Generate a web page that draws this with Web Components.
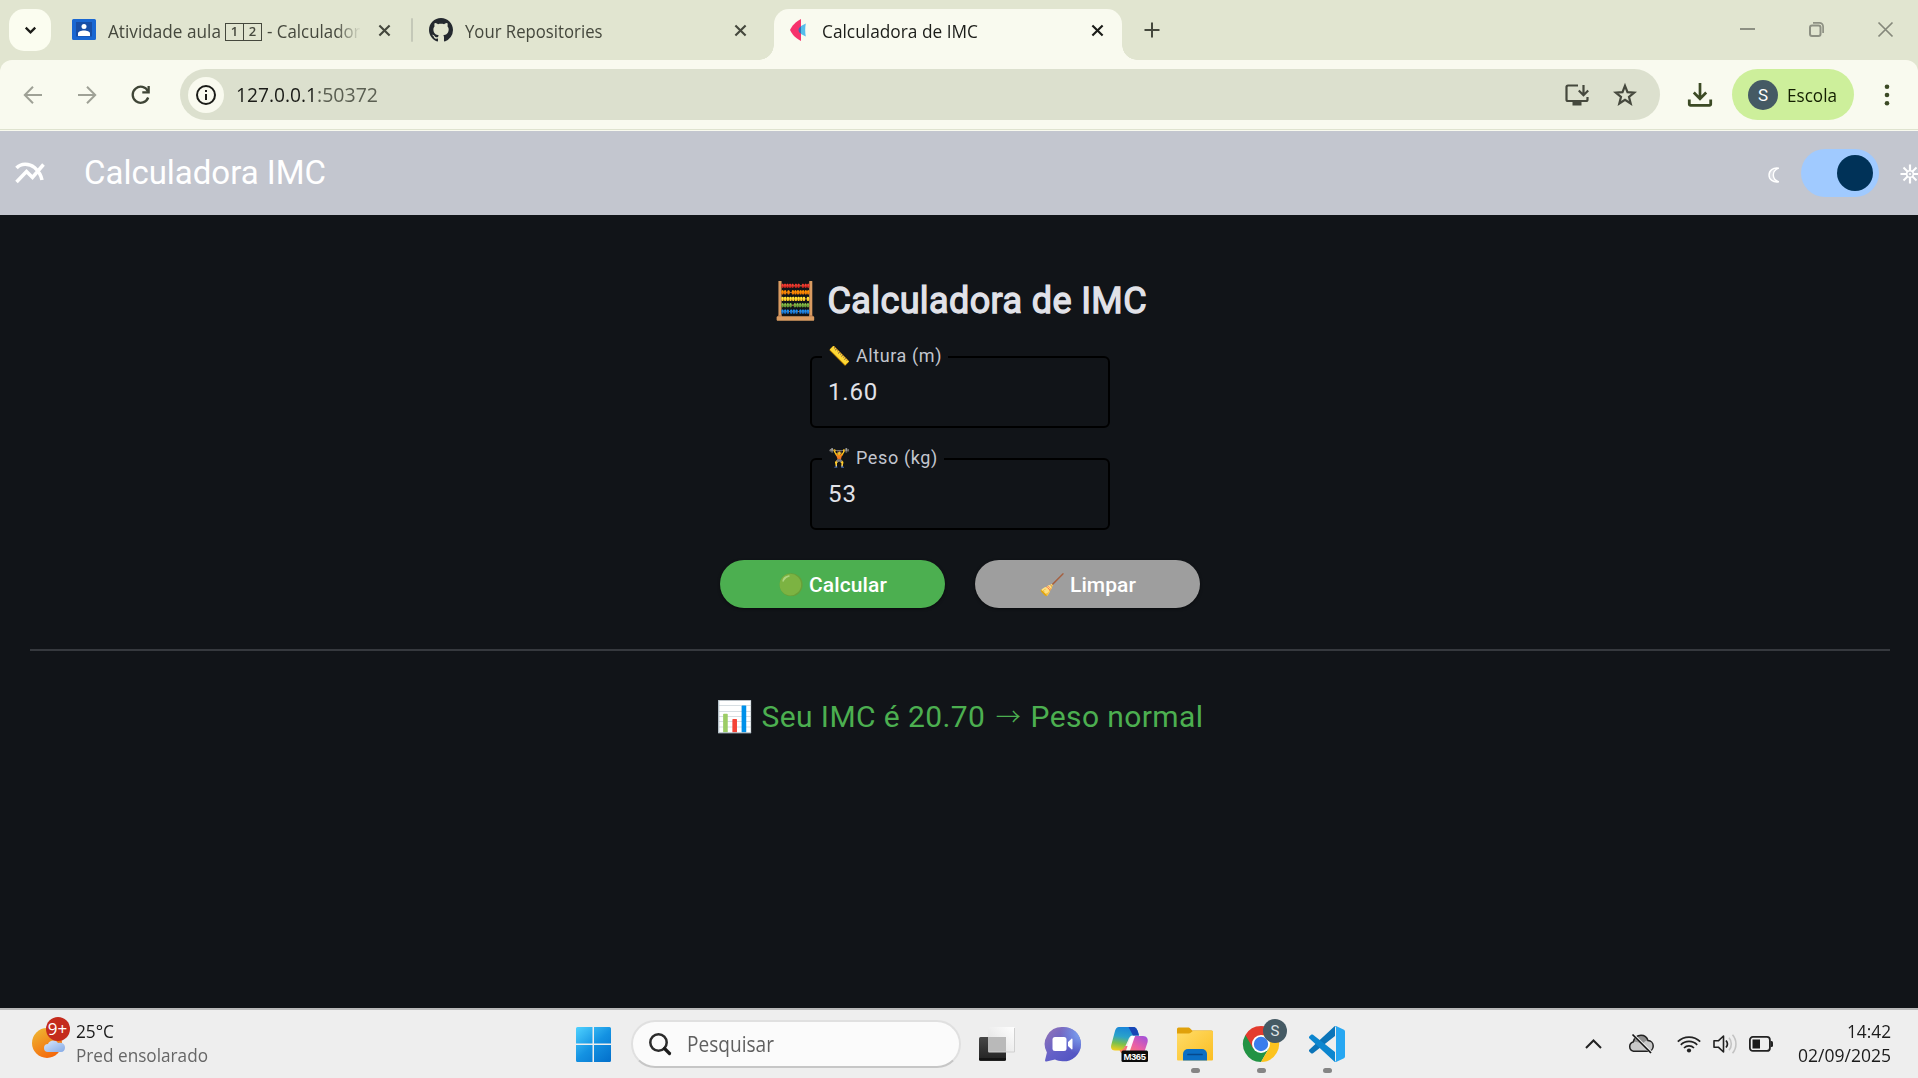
<!DOCTYPE html>
<html lang="pt-BR">
<head>
<meta charset="utf-8">
<title>Calculadora de IMC</title>
<style>
html,body{margin:0;height:100%}
body{display:flex;flex-direction:column;width:1918px;height:1078px;overflow:hidden;font-family:"Open Sans","Noto Sans",sans-serif;background:#111418}
</style>
</head>
<body>
<browser-tabs></browser-tabs>
<browser-toolbar></browser-toolbar>
<app-header heading="Calculadora IMC"></app-header>
<imc-page></imc-page>
<task-bar></task-bar>
<script>
const define = (name, html, setup) => {
  const tpl = document.createElement('template');
  tpl.innerHTML = html;
  customElements.define(name, class extends HTMLElement {
    connectedCallback() {
      if (this.shadowRoot) return;
      this.attachShadow({mode: 'open'}).appendChild(tpl.content.cloneNode(true));
      customElements.upgrade(this.shadowRoot);
      if (setup) setup(this, this.shadowRoot);
    }
  });
};

const ICONS = {
  chevdown: [20,20,'<path d="M5 7l5 5 5-5" fill="none" stroke="#1b1c18" stroke-width="2.4"/>'],
  close: [14,14,'<path d="M1.5 1.5l11 11M12.500 1.500l-11 11" stroke="currentColor" stroke-width="2.3"/>'],
  plus: [16,16,'<path d="M8 .5v15M.5 8h15" stroke="#45483d" stroke-width="2"/>'],
  classroom: [24,24,'<path d="M0 2.500a1.500 1.500 0 011.500-1.500h21a1.500 1.500 0 011.500 1.500v18a1.500 1.500 0 01-1.500 1.500h-21a1.500 1.500 0 01-1.500-1.500z" fill="#1967d2"/><path d="M4 4h16v14.500H4z" fill="#174ea6"/><circle cx="12" cy="8.500" r="2.500" fill="#fff"/><path d="M6 18v-2.500c0-1.800 3-3 6-3s6 1.200 6 3V18z" fill="#fff"/>'],
  github: [16,16,'<path fill="#24292f" d="M8 0C3.580 0 0 3.580 0 8c0 3.540 2.290 6.530 5.470 7.590.4.070.55-.17.55-.38 0-.19-.01-.82-.01-1.490-2.010.37-2.530-.49-2.690-.94-.09-.23-.48-.94-.82-1.130-.28-.15-.68-.52-.01-.53.63-.01 1.080.58 1.230.82.72 1.210 1.870.87 2.330.66.07-.52.28-.87.51-1.070-1.780-.2-3.640-.89-3.640-3.950 0-.87.31-1.590.82-2.150-.08-.2-.36-1.020.08-2.120 0 0 .67-.21 2.200.82.64-.18 1.320-.27 2-.27.68 0 1.360.09 2 .27 1.530-1.040 2.200-.82 2.200-.82.44 1.100.16 1.920.08 2.120.51.56.82 1.270.82 2.150 0 3.070-1.870 3.750-3.650 3.950.29.25.54.73.54 1.480 0 1.070-.01 1.930-.01 2.200 0 .21.15.46.55.38A8.013 8.013 0 0016 8c0-4.420-3.580-8-8-8z"/>'],
  flet: [24,24,'<path d="M14 1v22c-6-3-9-7-11-11C5 8 8 4 14 1z" fill="#f6326c"/><path d="M14 8.500c-1.500.5-2.500 2-2.500 3.500s1 3 2.500 3.500z" fill="#3670b8"/><path d="M14 8l4.800-2.500c-.8 4.500-.8 8.500 0 13L14 16z" fill="#55bdeb"/>'],
  min: [15,15,'<path d="M0 7h15" stroke="#8d9083" stroke-width="2"/>'],
  max: [15,15,'<rect x="1" y="3.500" width="10.500" height="10.500" rx="2" fill="none" stroke="#8d9083" stroke-width="2"/><path d="M4 .9h6.500a3.600 3.600 0 013.600 3.600V11" fill="none" stroke="#8d9083" stroke-width="1.700"/>'],
  exit: [15,15,'<path d="M.5 .5l14 14M14.500 .5l-14 14" stroke="#85887b" stroke-width="1.700"/>'],
  back: [20,20,'<path d="M19 10H2M10 1.800L1.800 10l8.200 8.200" fill="none" stroke="#9fa196" stroke-width="2"/>'],
  fwd: [20,20,'<path d="M1 10h17M10 1.800l8.200 8.200-8.200 8.200" fill="none" stroke="#9fa196" stroke-width="2"/>'],
  reload: [20,20,'<path d="M17.200 12.500A8 8 0 1117 6.500" fill="none" stroke="#3f4536" stroke-width="2.300"/><path d="M18.800 1v7.500h-7.500V6.300h5.200V1z" fill="#3f4536"/>'],
  info: [22,22,'<circle cx="11" cy="11" r="9" fill="none" stroke="#1b1c18" stroke-width="2"/><path d="M11 10v6M11 6v2" stroke="#1b1c18" stroke-width="2"/>'],
  install: [24,24,'<path d="M13 2.500H3A1.500 1.500 0 001.500 4v12.500A1.500 1.500 0 003 18h18a1.500 1.500 0 001.500-1.500V14" fill="none" stroke="#45483d" stroke-width="2.200"/><path d="M7.500 18h9v4.500h-9z" fill="#45483d"/><path d="M18.500 2v10M13.800 7.500l4.700 4.700 4.700-4.700" fill="none" stroke="#45483d" stroke-width="2.200"/>'],
  star: [24,24,'<path d="M12 2.800l2.500 6.300 6.700.5-5.200 4.300 1.700 6.600L12 16.900l-5.700 3.600L8 13.900 2.800 9.600l6.700-.5z" fill="none" stroke="#45483d" stroke-width="2.200"/>'],
  download: [24,24,'<path d="M12 0v16M5.800 9.500L12 15.800l6.200-6.300" fill="none" stroke="#3c4a25" stroke-width="2.700"/><path d="M1.300 16.500v4.700a1.200 1.200 0 001.200 1.200h19a1.200 1.200 0 001.200-1.200v-4.700" fill="none" stroke="#3c4a25" stroke-width="2.800"/>'],
  dots: [6,24,'<g fill="#3c4a25"><circle cx="3" cy="3.700" r="2.300"/><circle cx="3" cy="12" r="2.300"/><circle cx="3" cy="20.300" r="2.300"/></g>'],
  lines: [30,22,'<path d="M1.500 20L11.500 9.500l6 6L28.500 2.500M1.500 6C6 1 14 1 19.500 5.500c4.500 4 6.500 7.500 7.500 12.500" fill="none" stroke="#fff" stroke-width="3.500"/>'],
  moon: [12,16,'<path d="M10.800 1.200C5 .3 1 3.500 1 8s4 7.700 9.800 6.800C7 13.500 5.300 11 5.300 8s1.700-5.500 5.500-6.800z" fill="#fff" fill-opacity=".35" stroke="#fff" stroke-width="1.400"/>'],
  sun: [20,20,'<g stroke="#fff" fill="none" stroke-width="2.200"><circle cx="10" cy="10" r="3.300" stroke-width="1.500"/><path d="M10 .5v6M10 13.500v6M.5 10h6M13.500 10h6"/><path d="M3.500 3.500l4 4M12.500 12.500l4 4M16.500 3.500l-4 4M7.500 12.500l-4 4" stroke-width="2"/></g><circle cx="10" cy="10" r="1.100" fill="#fff"/>'],
  weather: [36,32,'<defs><linearGradient id="a" x1="0" y1="0" x2=".6" y2="1"><stop offset="0" stop-color="#eebc35"/><stop offset="1" stop-color="#f4680b"/></linearGradient><linearGradient id="b" x1="0" y1="0" x2="1" y2="1"><stop offset="0" stop-color="#dbe8fb"/><stop offset="1" stop-color="#84aae6"/></linearGradient></defs><circle cx="15" cy="16" r="15" fill="url(#a)"/><path d="M16 25a4 4 0 010-8c1-4 8-5 10-1 4-1 7 1 7 4.500 0 2.500-1.500 4.500-4 4.500z" fill="url(#b)"/>'],
  start: [35,35,'<defs><linearGradient id="a" gradientUnits="userSpaceOnUse" x1="0" y1="0" x2="30" y2="35"><stop offset="0" stop-color="#4fd2ff"/><stop offset=".55" stop-color="#1492e2"/><stop offset="1" stop-color="#0573cd"/></linearGradient></defs><path fill="url(#a)" d="M1.500 0h15v16.500H0V1.500A1.500 1.500 0 011.500 0zM18 0h15.500A1.500 1.500 0 0135 1.500v15H18zM0 18h16.500v17h-15A1.500 1.500 0 010 33.500zM18 18h17v15.500a1.500 1.500 0 01-1.500 1.500H18z"/>'],
  search: [22,22,'<circle cx="9.500" cy="9.500" r="8.200" fill="none" stroke="#2b2b2b" stroke-width="2.500"/><path d="M15.500 15.500l5 5" stroke="#1c1c1c" stroke-width="3.200" stroke-linecap="round"/>'],
  taskview: [36,35,'<defs><linearGradient id="a" x1="0" y1="0" x2="0" y2="1"><stop offset="0" stop-color="#474747"/><stop offset="1" stop-color="#212121"/></linearGradient><linearGradient id="b" x1="1" y1="0" x2="0" y2="1"><stop offset="0" stop-color="#fff"/><stop offset="1" stop-color="#dedede"/></linearGradient></defs><rect x="0" y="10" width="27" height="24" rx="1.500" fill="url(#a)"/><path d="M0 32h27" stroke="#050505"/><rect x="9" y="0" width="27" height="25" rx="1.500" fill="url(#b)"/><path d="M9 10h18v15H10.500A1.500 1.500 0 019 23.500z" fill="#b9b9b9"/><path d="M35.500 1v24H9.500" fill="none" stroke="#d0d0d0"/>'],
  chat: [35,35,'<defs><linearGradient id="a" x1="0" y1="0" x2="1" y2="1"><stop offset="0" stop-color="#9675b5"/><stop offset=".5" stop-color="#6360c8"/><stop offset="1" stop-color="#4b4fc0"/></linearGradient><radialGradient id="b" cx="1" cy=".2" r=".6"><stop offset="0" stop-color="#7fa7f2"/><stop offset="1" stop-color="#7fa7f2" stop-opacity="0"/></radialGradient></defs><path d="M17.500 0a17.200 17.200 0 110 34.300c-2.800 0-5.300-.6-7.500-1.700L1.500 34.500C.4 34.700-.2 34 .1 33l1.800-7.500A17.200 17.200 0 0117.500 0z" fill="url(#a)"/><path d="M17.500 0a17.200 17.200 0 110 34.300A17.200 17.200 0 0117.500 0z" fill="url(#b)"/><rect x="7.500" y="10" width="14" height="14" rx="2.500" fill="#fff"/><path d="M23 15l3.500-3.200c.4-.4 1-.1 1 .5v9.400c0 .6-.6.9-1 .5L23 19z" fill="#fff"/>'],
  copilot: [37,35,'<defs><linearGradient id="a" x1=".4" y1="0" x2=".2" y2="1"><stop offset="0" stop-color="#1a86d9"/><stop offset=".4" stop-color="#2ba3c9"/><stop offset=".7" stop-color="#7cc04b"/><stop offset="1" stop-color="#f4cf1c"/></linearGradient><linearGradient id="b" x1="1" y1="0" x2="0" y2="1"><stop offset="0" stop-color="#9a4fe0"/><stop offset=".5" stop-color="#ea5fa5"/><stop offset="1" stop-color="#ff8d4d"/></linearGradient></defs><path d="M8 0h14c3 0 4 2 5 5l1 3.500h-6c-3 0-4 2-5 5L14 20c-1 2.500-2 3.500-5 3.500H4c-4 0-4.500-3-3.500-6.500L4 4c.8-2.500 2-4 4-4z" fill="url(#a)"/><path d="M17.500 0H22c3 0 4 2 5 5l1 3.500h-6z" fill="#1745b5"/><path d="M24 9h8c4 0 5.500 3 4.500 6.500L33 26H10l-1.500-3c3.500 0 4.500-1.500 5.500-4h3.500z" fill="url(#b)"/><path d="M20 9h4l-5.500 16h-4z" fill="#fff" opacity=".95"/><rect x="10.500" y="23.500" width="26.500" height="11.500" rx="1.500" fill="#0b0b0b"/><text x="23.700" y="32.600" text-anchor="middle" font-family="Liberation Sans" font-weight="700" font-size="9.500" textLength="22.500" fill="#fff">M365</text>'],
  folder: [36,34,'<defs><linearGradient id="a" x1="0" y1="0" x2="1" y2="1"><stop offset="0" stop-color="#ffdc68"/><stop offset="1" stop-color="#fbbe22"/></linearGradient></defs><path d="M0 2A1.500 1.500 0 011.500.5H11c1 0 1.500.3 2.200 1l2 2H34.500A1.500 1.500 0 0136 5v6H0z" fill="#e0a10b"/><path d="M0 6.500h11c1.500 0 2-.3 3-1l1.500-1.200c.6-.4 1-.5 1.700-.5H35a1 1 0 011 1V32.500a1 1 0 01-1 1H1a1 1 0 01-1-1z" fill="url(#a)"/><path d="M6 33.500V27a5 5 0 015-5h14a5 5 0 015 5v6.500z" fill="#0b6fc4"/><path d="M11 27.500h14" stroke="#06498c" stroke-width="1.700" stroke-linecap="round"/>'],
  chrome: [48,48,'<path d="M24 24L3.200 12A24 24 0 0024 48l10.400-18z" fill="#229344"/><path d="M24 12h20.800A24 24 0 0124 48l10.400-18z" fill="#fcc31e"/><path d="M24 12h20.800A24 24 0 003.200 12l10.400 18z" fill="#e33b2e"/><circle cx="24" cy="24" r="12" fill="#fff"/><circle cx="24" cy="24" r="9.600" fill="#3b7ded"/>'],
  vscode: [36,36,'<path d="M26 0v10L4 27.200c-.6.500-1.300.5-1.900 0L.5 25.700c-.7-.6-.7-1.600 0-2.200L25 .8z" fill="#0b74b8"/><path d="M26 36V26L4 8.800c-.6-.5-1.300-.5-1.900 0L.5 10.300c-.7.6-.7 1.600 0 2.200L25 35.200z" fill="#0c86cf"/><path d="M27 0l8 3.800c.6.300 1 .9 1 1.600v25.200c0 .7-.4 1.300-1 1.600L27 36c-1 .3-1.800 0-2.500-.6.900.9 2.500.2 2.500-1.100V1.700c0-1.300-1.600-2-2.500-1.100C25.200 0 26 -.3 27 0z" fill="#27a7f2"/>'],
  up: [17,10,'<path d="M1 9l7.500-7.500L16 9" fill="none" stroke="#222" stroke-width="2"/>'],
  cloudoff: [26,20,'<path d="M5.500 17.300a4.800 4.800 0 01-.3-9.300C6.500 3.300 9.500 1.200 13 1.200c3.600 0 6 2 7 5.300 3 .2 5.200 2.400 5.200 5.400 0 3.200-2.200 5.400-5.200 5.400z" fill="#c9c9c9"/><path d="M5.200 8C6.500 3.300 9.500 1.200 13 1.200c3.600 0 6 2 7 5.300-3 0-4.500 1.500-5.500 4.500C11 8 8 7.500 5.200 8z" fill="#8d8d8d"/><path d="M5.500 17.300a4.800 4.800 0 01-.3-9.300C6.500 3.300 9.500 1.200 13 1.200c3.600 0 6 2 7 5.300 3 .2 5.200 2.400 5.200 5.400 0 3.200-2.200 5.400-5.200 5.400z" fill="none" stroke="#222" stroke-width="1.500"/><path d="M5.500 1l18 18" stroke="#eee" stroke-width="3"/><path d="M4.500.5l18.500 18.500" stroke="#111" stroke-width="1.700"/>'],
  wifi: [24,18,'<g fill="none" stroke="#222" stroke-width="1.700"><path d="M.8 6.700a15.800 15.800 0 0122.400 0M3.800 9.800a11.600 11.600 0 0116.400 0M7 13a7 7 0 0110 0"/></g><circle cx="12" cy="15.500" r="2.100" fill="#222"/>'],
  speaker: [25,20,'<path d="M1 6.800h4.300L10.500 2v16l-5.200-4.800H1z" fill="none" stroke="#222" stroke-width="1.600" stroke-linejoin="round"/><path d="M13 6.500a5.500 5.500 0 010 7" fill="none" stroke="#222" stroke-width="1.700"/><path d="M16 3.800a9.500 9.500 0 010 12.400M19.500.8a14 14 0 010 18.400" fill="none" stroke="#c3c3c3" stroke-width="1.600"/>'],
  battery: [24,16,'<rect x=".9" y=".9" width="20" height="14" rx="3" fill="none" stroke="#222" stroke-width="1.800"/><rect x="3.500" y="3.500" width="7.500" height="9" fill="#1a1a1a"/><path d="M21.500 5h1A1.500 1.500 0 0124 6.500v3a1.500 1.500 0 01-1.500 1.500h-1z" fill="#222"/>'],
};

/* Inline icon: name, width, height */
define('ui-icon', '<style>:host{display:block;flex:none}svg{display:block;overflow:visible}</style><div></div>', (el, root) => {
  const [vw, vh, body] = ICONS[el.getAttribute('name')];
  const w = el.getAttribute('w') || vw, h = el.getAttribute('h') || vh;
  root.querySelector('div').innerHTML = `<svg width="${w}" height="${h}" viewBox="0 0 ${vw} ${vh}">${body}</svg>`;
});

/* One line of text fitted to a given advance width: by tracking, by horizontal scale, or not at all (plain) */
define('fit-text', '<style>:host{display:block;white-space:pre;flex:none}span{display:inline-block;transform-origin:0 50%}</style><span><slot></slot></span>', (el, root) => {
  const w = +el.getAttribute('w'), span = root.querySelector('span');
  const natural = span.getBoundingClientRect().width;
  el.style.width = w + 'px';
  if (!natural || el.hasAttribute('plain')) return;
  if (el.hasAttribute('track')) span.style.letterSpacing = (w - natural) / el.textContent.length + 'px';
  else span.style.transform = `scaleX(${w / natural})`;
});

define('tab-item', `<style>
:host{display:flex;align-items:center;height:42px;color:#45483d;font-size:18px;line-height:26px;flex:none}
::slotted(fit-text){margin-top:2px}
.t{flex:1;min-width:0;display:flex;align-items:center}
</style><slot name="icon"></slot><div class="t"><slot></slot></div><ui-icon name="close" w="13" h="13"></ui-icon>`);

define('browser-tabs', `<style>
:host{display:flex;height:60px;background:#e1e5d0;align-items:flex-start}
.menu{width:42px;height:42px;margin:9px 0 0 9px;border-radius:15px;background:#fbfdf0;display:flex;align-items:center;justify-content:center}
.a,.b,.c{margin-top:9px}
.a{width:318.500px;margin-left:21px}
.a ui-icon,.b ui-icon{margin-right:12px}
.label{display:flex;align-items:center;width:254px;-webkit-mask-image:linear-gradient(90deg,#000 228px,transparent 253px)}
.label fit-text{margin-top:2px}
.key{box-sizing:border-box;flex:none;width:19px;height:18px;border:1.500px solid #45483d;font:600 13px/15px "Open Sans";text-align:center;margin-top:4px}
.key+.key{margin-left:-1px}
.sep{width:2px;height:24px;background:#c4c8b8;margin:18px 16px 0 20px;border-radius:1px}
.b{width:318.500px}
.c{width:317px;height:51px;background:#f9faef;border-radius:15px 15px 0 0;margin-left:27px;padding:0 18px 0 13px;color:#1b1c18;position:relative}
.c::before,.c::after{content:"";position:absolute;bottom:0;width:15px;height:15px}
.c::before{left:-15px;background:radial-gradient(circle at 0 0,transparent 14.500px,#f9faef 15px)}
.c::after{right:-15px;background:radial-gradient(circle at 100% 0,transparent 14.500px,#f9faef 15px)}
.inner{display:flex;height:42px;align-items:center;font-size:18px;line-height:26px}
.inner fit-text{margin:2px auto 0 11px}
.plus{margin:22px 0 0 22px}
.win{display:flex;margin:22px 25px 0 auto;gap:54px}
</style>
<div class="menu"><ui-icon name="chevdown" w="19" h="19"></ui-icon></div>
<tab-item class="a"><ui-icon slot="icon" name="classroom"></ui-icon><div class="label"><fit-text w="113">Atividade aula</fit-text><span class="key" style="margin-left:4px">1</span><span class="key">2</span><fit-text w="93.500" style="margin-left:5px">- Calculador</fit-text></div></tab-item>
<div class="sep"></div>
<tab-item class="b"><ui-icon slot="icon" name="github" w="24" h="24"></ui-icon><fit-text w="137.500">Your Repositories</fit-text></tab-item>
<div class="c"><div class="inner"><ui-icon name="flet" w="24" h="24"></ui-icon><fit-text w="156">Calculadora de IMC</fit-text><ui-icon name="close" w="13" h="13"></ui-icon></div></div>
<ui-icon class="plus" name="plus"></ui-icon>
<div class="win"><ui-icon name="min"></ui-icon><ui-icon name="max"></ui-icon><ui-icon name="exit"></ui-icon></div>`);

define('browser-toolbar', `<style>
:host{display:block;height:71px;background:#e1e5d0}
.bar{box-sizing:border-box;height:69px;background:#f9faef;border-radius:12px 12px 0 0;display:flex;align-items:center;padding-left:23px}
.line{height:1px;background:#dfe3cf}.line+.line{background:#f9faef}
.nav{display:flex;gap:34px}
.omni{box-sizing:border-box;width:1480px;height:51px;border-radius:26px;background:#dce0ce;margin-left:29px;display:flex;align-items:center;padding:0 23px 0 8px}
.info{width:36px;height:36px;border-radius:50%;background:#f9faef;display:flex;align-items:center;justify-content:center;margin-right:12px}
fit-text{font-size:20px;line-height:28px}
.host{color:#1b1c18}.port{color:#5b5f52}
.push{margin-left:auto}
.star{margin-left:24px}
.dl{margin-left:28px;}
.profile{box-sizing:border-box;width:122px;height:51px;border-radius:26px;background:#cdef9b;margin-left:20px;display:flex;align-items:center;padding-left:16px}
.av{width:30px;height:30px;border-radius:50%;background:#455a64;color:#fff;font:17px/30px Roboto;text-align:center;margin-right:9px}
.profile fit-text{font-size:18px;line-height:26px;color:#131f00}
.dots{margin-left:30px}
</style>
<div class="bar"><div class="nav"><ui-icon name="back"></ui-icon><ui-icon name="fwd"></ui-icon><ui-icon name="reload"></ui-icon></div>
<div class="omni"><div class="info"><ui-icon name="info"></ui-icon></div><fit-text class="host" w="81">127.0.0.1</fit-text><fit-text class="port" w="61">:50372</fit-text><ui-icon class="push" name="install"></ui-icon><ui-icon class="star" name="star"></ui-icon></div>
<ui-icon class="dl" name="download"></ui-icon>
<div class="profile"><div class="av">S</div><fit-text w="50">Escola</fit-text></div>
<ui-icon class="dots" name="dots"></ui-icon></div><div class="line"></div><div class="line"></div>`);

define('toggle-switch', `<style>:host{box-sizing:border-box;display:flex;align-items:center;justify-content:flex-end;width:78px;height:48px;border-radius:24px;background:#a0caff;padding-right:6px}
i{width:36px;height:36px;border-radius:50%;background:#003258}</style><i></i>`);

define('app-header', `<style>
:host{box-sizing:border-box;display:flex;align-items:center;height:84px;background:#c3c6cf;color:#fff;padding-left:15px;font:33px/48px Roboto,sans-serif;overflow:hidden}
fit-text{margin-left:39px}
.moon{margin:3px 21px 0 auto}
.sun{margin:1px -2px 0 21px}
</style><ui-icon name="lines"></ui-icon><fit-text track w="242"></fit-text>
<ui-icon class="moon" name="moon"></ui-icon><toggle-switch></toggle-switch><ui-icon class="sun" name="sun"></ui-icon>`, (el, root) => {
  const old = root.querySelector('fit-text'), t = document.createElement('fit-text');
  t.setAttribute('w', '242'); t.setAttribute('track', ''); t.textContent = el.getAttribute('heading');
  old.replaceWith(t);
});

define('outlined-field', `<style>
:host{box-sizing:border-box;display:block;width:300px;height:72px;border:2px solid #000;border-radius:6px;position:relative;padding:20px 0 0 16px;color:#e1e2e8;font:24px/28px Roboto,sans-serif}
.l{position:absolute;left:10px;top:-14px;height:24px;background:#111418;padding:0 6px;display:flex;align-items:center;font-size:18px;line-height:24px;color:#c3c6cf}
</style><div class="l"><slot name="label"></slot></div><slot></slot>`);

define('pill-button', `<style>
:host{box-sizing:border-box;padding-top:1.500px;display:flex;align-items:center;justify-content:center;width:225px;height:48px;border-radius:24px;color:#fff;font:500 21px/30px Roboto,sans-serif;box-shadow:0 1px 3px rgba(0,0,0,.5)}
</style><slot></slot>`);

define('imc-page', `<style>
:host{display:flex;flex-direction:column;align-items:center;height:793px;background:#111418;font-family:Roboto,"Noto Color Emoji",sans-serif}
.h{display:flex;align-items:center;height:60px;margin:56px 0 0 2px;font-size:36px;line-height:60px;color:#e1e2e8}
.h .x{-webkit-text-stroke:1.300px #e1e2e8}
.fields{display:flex;flex-direction:column;gap:30px;margin:25px 0 0 2px}
.btns{display:flex;gap:30px;margin:30px 0 0 2px}
hr{width:1860px;height:2px;border:0;margin:41px 0 0 2px;background:#36393e}
.r{display:flex;align-items:center;height:48px;margin:42px 0 0 2px;font-size:30px;line-height:48px;color:#4caf50}
.e{font-family:"Noto Color Emoji";font-weight:400}
.arrow{font:300 25px/1 "Noto Sans CJK JP";vertical-align:1px;margin:0 1.500px 0 2.500px}
</style>
<div class="h"><fit-text plain class="e" w="54.500">🧮</fit-text><fit-text class="x" track w="319.500">Calculadora de IMC</fit-text></div>
<div class="fields">
<outlined-field><fit-text plain class="e" slot="label" w="28">📏</fit-text><fit-text slot="label" track w="86">Altura (m)</fit-text><fit-text track w="50">1.60</fit-text></outlined-field>
<outlined-field><fit-text plain class="e" slot="label" w="28">🏋</fit-text><fit-text slot="label" track w="82">Peso (kg)</fit-text><fit-text track w="29">53</fit-text></outlined-field></div>
<div class="btns"><pill-button style="background:#4caf50"><fit-text plain class="e" w="31">🟢</fit-text><fit-text track w="78">Calcular</fit-text></pill-button>
<pill-button style="background:#9e9e9e"><fit-text plain class="e" w="31">🧹</fit-text><fit-text track w="66">Limpar</fit-text></pill-button></div>
<hr>
<div class="r"><fit-text plain class="e" w="45">📊</fit-text><fit-text track w="442">Seu IMC é 20.70 <span class="arrow">→</span> Peso normal</fit-text></div>`);

define('task-app', `<style>
:host{display:block;width:36px;height:51px;position:relative;flex:none}
.i{height:36px;display:flex;align-items:center;justify-content:center}
.dot{display:none;width:9px;height:5px;border-radius:3px;background:#858585;margin:6px auto 0}
:host([running]) .dot{display:block}
::slotted(b){position:absolute;right:-8px;top:-7px;width:24px;height:24px;border-radius:50%;background:#455a64;color:#dde3e6;font:15px/24px Roboto;text-align:center}
</style><div class="i"><slot></slot></div><div class="dot"></div>`);

define('task-bar', `<style>
:host{box-sizing:border-box;display:flex;height:70px;background:#eee;border-top:2px solid #b9b9b9;font-size:18px;line-height:24px;color:#1b1b1b}
.w{display:flex;position:relative;padding:17px 0 0 32px;width:576px;box-sizing:border-box}
.badge{position:absolute;left:45.500px;top:7px;width:24px;height:24px;border-radius:50%;background:#c42b1c;color:#fff;font:17px/24px "Open Sans";text-align:center}
.wt{margin:-8px 0 0 8px}.g{color:#666}
.s{box-sizing:border-box;width:330px;height:48px;border-radius:24px;background:#fbfbfb;border:2px solid #e0e0e0;border-bottom-color:#c6c6c6;margin:10px 18px 0 20px;display:flex;align-items:center;padding-left:16px}
.s fit-text{font-size:21px;line-height:28px;color:#606060;margin-left:16px}
.start{margin-top:17px}
.apps{display:flex;gap:30px;padding-top:16px}
.tray{display:flex;align-items:center;height:48px;margin:10px 27px 0 auto}
.clock{display:flex;flex-direction:column;align-items:flex-end;margin-top:-2px}
</style>
<div class="w"><ui-icon name="weather"></ui-icon><span class="badge">9+</span><div class="wt"><fit-text w="38">25°C</fit-text><fit-text class="g" w="132">Pred ensolarado</fit-text></div></div>
<ui-icon class="start" name="start"></ui-icon>
<div class="s"><ui-icon name="search"></ui-icon><fit-text w="87">Pesquisar</fit-text></div>
<div class="apps">
<task-app><ui-icon name="taskview"></ui-icon></task-app>
<task-app><ui-icon name="chat" style="margin-left:-2px"></ui-icon></task-app>
<task-app><ui-icon name="copilot"></ui-icon></task-app>
<task-app running><ui-icon name="folder"></ui-icon></task-app>
<task-app running><ui-icon name="chrome" w="36" h="36"></ui-icon><b>S</b></task-app>
<task-app running><ui-icon name="vscode"></ui-icon></task-app></div>
<div class="tray"><ui-icon name="up"></ui-icon><ui-icon name="cloudoff" style="margin-left:26px"></ui-icon><ui-icon name="wifi" style="margin-left:23px"></ui-icon><ui-icon name="speaker" style="margin-left:12px"></ui-icon><ui-icon name="battery" style="margin:0 25px 0 11px"></ui-icon>
<div class="clock"><fit-text w="44">14:42</fit-text><fit-text w="93">02/09/2025</fit-text></div></div>`);
</script>
</body>
</html>
